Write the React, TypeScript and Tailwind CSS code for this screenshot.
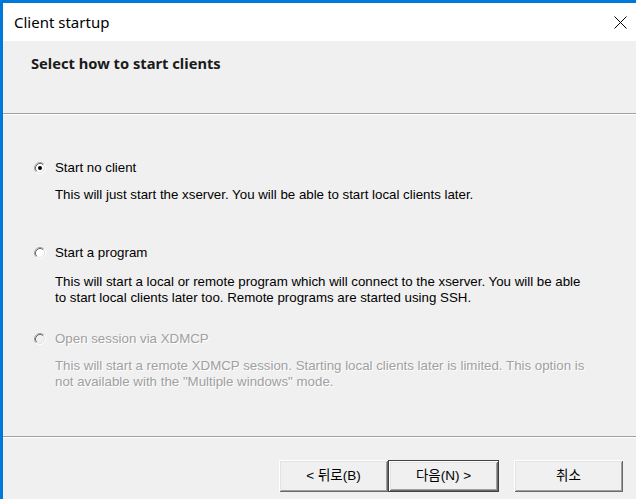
import React from 'react';

type Option = {
  label: string;
  lines: string[];
  checked?: boolean;
  disabled?: boolean;
  labelTop: string;
  descTop: string;
};

const options: Option[] = [
  {
    label: 'Start no client',
    lines: ['This will just start the xserver. You will be able to start local clients later.'],
    checked: true,
    labelTop: 'mt-0',
    descTop: 'mt-[11px]',
  },
  {
    label: 'Start a program',
    lines: [
      'This will start a local or remote program which will connect to the xserver. You will be able',
      'to start local clients later too. Remote programs are started using SSH.',
    ],
    labelTop: 'mt-[42px]',
    descTop: 'mt-[13px]',
  },
  {
    label: 'Open session via XDMCP',
    lines: [
      'This will start a remote XDMCP session. Starting local clients later is limited. This option is',
      'not available with the "Multiple windows" mode.',
    ],
    disabled: true,
    labelTop: 'mt-[25px]',
    descTop: 'mt-[11px]',
  },
];

function Radio({ checked, disabled }: { checked?: boolean; disabled?: boolean }) {
  return (
    <svg width="12" height="12" viewBox="0 0 12 12" className="shrink-0">
      <circle cx="6" cy="6" r="4" fill={disabled ? '#f0f0f0' : '#ffffff'} />
      <path d="M2.11 9.89 A5.5 5.5 0 0 1 9.89 2.11" fill="none" stroke="#a0a0a0" strokeWidth="1" />
      <path d="M2.82 9.18 A4.5 4.5 0 0 1 9.18 2.82" fill="none" stroke="#696969" strokeWidth="1" />
      <path d="M2.11 9.89 A5.5 5.5 0 0 0 9.89 2.11" fill="none" stroke="#ffffff" strokeWidth="1" />
      <path d="M2.82 9.18 A4.5 4.5 0 0 0 9.18 2.82" fill="none" stroke="#e3e3e3" strokeWidth="1" />
      {checked && <circle cx="6" cy="6" r="2" fill="#000000" />}
    </svg>
  );
}

function WizardButton({ children, isDefault }: { children: React.ReactNode; isDefault?: boolean }) {
  const bevel =
    'shadow-[inset_1px_1px_0_#ffffff,inset_-1px_-1px_0_#696969,inset_2px_2px_0_#e3e3e3,inset_-2px_-2px_0_#a0a0a0]';
  if (isDefault) {
    return (
      <div className="w-[111px] h-[32px] border border-[#404040]">
        <div className={`w-full h-full flex items-center justify-center bg-[#f0f0f0] ${bevel}`}>{children}</div>
      </div>
    );
  }
  return (
    <div className={`w-[109px] h-[32px] flex items-center justify-center bg-[#f0f0f0] ${bevel}`}>{children}</div>
  );
}

export default function App() {
  return (
    <div className="w-[636px] h-[499px] overflow-hidden bg-[#0078d7] pl-[3px] pt-[3px]">
      <div className="h-full flex flex-col bg-[#f0f0f0] font-['Liberation_Sans','Noto_Sans_CJK_KR',sans-serif] text-[13.3px] leading-[16px] text-black">
        {/* title bar */}
        <div className="h-[38px] shrink-0 bg-white flex items-center justify-between pl-[11px] pr-[9px]">
          <span className="font-['Noto_Sans',sans-serif] text-[15px] leading-[20px] text-black">Client startup</span>
          <svg width="13" height="13" viewBox="0 0 13 13">
            <path d="M0.5 0.5 L12.5 12.5 M12.5 0.5 L0.5 12.5" stroke="#000" strokeWidth="1" />
          </svg>
        </div>

        {/* header */}
        <div className="h-[72px] shrink-0 pl-[28px] pt-[12px]">
          <div className="font-['Noto_Sans',sans-serif] font-bold text-[14.7px] leading-[20px] text-[#1a1a1a]">
            Select how to start clients
          </div>
        </div>
        <div className="h-px shrink-0 bg-[#a0a0a0]" />
        <div className="h-px shrink-0 bg-white" />

        {/* options */}
        <div className="h-[321px] shrink-0 pt-[45px] pl-[31px]">
          {options.map((o) => (
            <div key={o.label}>
              <div className={`flex items-center ${o.labelTop}`}>
                <Radio checked={o.checked} disabled={o.disabled} />
                <span
                  className={`ml-[9px] ${o.disabled ? 'text-[#a0a0a0] [text-shadow:1px_1px_0_#ffffff]' : ''}`}
                >
                  {o.label}
                </span>
              </div>
              <div
                className={`pl-[21px] whitespace-nowrap ${o.descTop} ${
                  o.disabled ? 'text-[#a0a0a0] [text-shadow:1px_1px_0_#ffffff]' : ''
                }`}
              >
                {o.lines.map((l) => (
                  <div key={l}>{l}</div>
                ))}
              </div>
            </div>
          ))}
        </div>
        <div className="h-px shrink-0 bg-[#a0a0a0]" />
        <div className="h-px shrink-0 bg-white" />

        {/* footer */}
        <div className="flex-1 flex justify-end items-start pt-[22px] pr-[13px] text-[13.5px]">
          <WizardButton>&lt; 뒤로(B)</WizardButton>
          <WizardButton isDefault>다음(N) &gt;</WizardButton>
          <div className="ml-[15px]">
            <WizardButton>취소</WizardButton>
          </div>
        </div>
      </div>
    </div>
  );
}
